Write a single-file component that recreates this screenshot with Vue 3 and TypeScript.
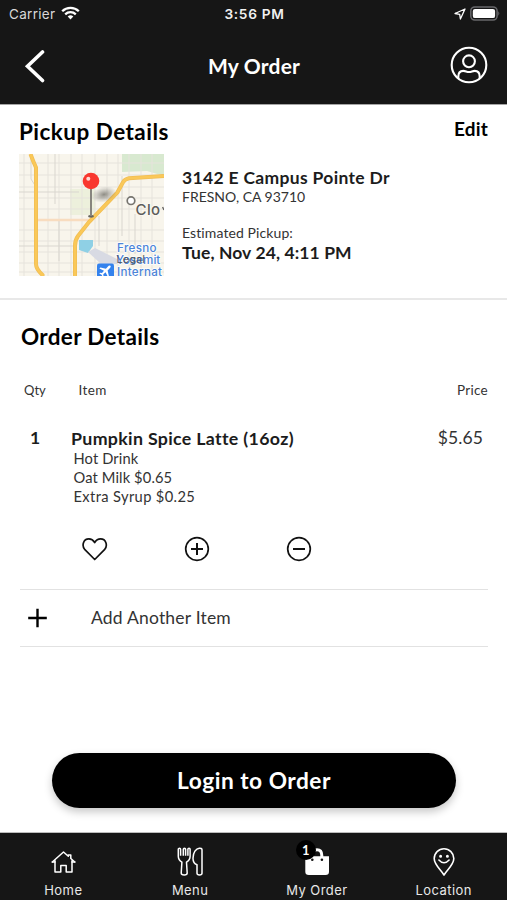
<script setup lang="ts">
interface Tab { id: string; label: string; badge?: number }

const item = {
  qty: 1,
  name: 'Pumpkin Spice Latte (16oz)',
  price: '$5.65',
  options: ['Hot Drink', 'Oat Milk $0.65', 'Extra Syrup $0.25'],
}

const tabs: Tab[] = [
  { id: 'home', label: 'Home' },
  { id: 'menu', label: 'Menu' },
  { id: 'order', label: 'My Order', badge: 1 },
  { id: 'location', label: 'Location' },
]

// Minor street grid of the map thumbnail
const streetsX = [5, 29, 40, 52, 63, 76, 88, 99, 110, 122, 133]
const streetsY = [9, 21, 33, 44, 55, 76, 87, 98, 109, 118]
</script>

<template>
  <div class="screen">
    <header class="top">
      <div class="status">
        <div class="carrier">
          <span>Carrier</span>
          <svg width="19" height="14" viewBox="0 0 19 14" fill="none" stroke="#fff" stroke-width="2.3">
            <path d="M1.2 5.2C5.8.7 13.2.7 17.8 5.2" />
            <path d="M4.2 8.3c3-2.8 7.600-2.8 10.600 0" />
            <path d="M6.700 10.500Q9.500 8.200 12.300 10.500L9.500 13.400z" fill="#fff" stroke="none" />
          </svg>
        </div>
        <span class="time">3:56 PM</span>
        <div class="power">
          <svg width="12" height="12" viewBox="0 0 12 12" fill="none" stroke="#fff" stroke-width="1.3" stroke-linejoin="round">
            <path d="M11 1 1 5.500l4.700.8.7 4.700z" />
          </svg>
          <svg width="30" height="15" viewBox="0 0 30 15">
            <rect x=".8" y=".9" width="26.300" height="13.200" rx="4" fill="#161616" stroke="#68686b" stroke-width="1.500" />
            <rect x="2.800" y="2.900" width="22.300" height="9.200" rx="2.200" fill="#fff" />
            <path d="M28.300 5.300q2 2.200 0 4.400z" fill="#68686b" />
          </svg>
        </div>
      </div>
      <div class="nav">
        <svg class="back" width="22" height="34" viewBox="0 0 22 34" fill="none" stroke="#fff" stroke-width="3.600" stroke-linecap="round">
          <path d="M18.500 3 3.500 17.300 18.500 31.500" />
        </svg>
        <h1>My Order</h1>
        <svg class="user" width="38" height="38" viewBox="0 0 38 38" fill="none" stroke="#fff" stroke-width="2.100">
          <circle cx="19" cy="19" r="17.300" />
          <circle cx="19" cy="15.300" r="5.900" />
          <path d="M8.300 32.200v-1.700c0-4 2.200-5.600 5-5.600 2.400 0 3.200 1.100 5.700 1.100s3.300-1.100 5.700-1.100c2.800 0 5 1.600 5 5.600v1.700" />
        </svg>
      </div>
    </header>

    <section class="pickup">
      <div class="pickup-head">
        <h2>Pickup Details</h2>
        <button class="edit">Edit</button>
      </div>
      <div class="pickup-body">
        <svg class="map" width="145" height="122" viewBox="0 0 145 122">
          <defs>
            <radialGradient id="pinShadow"><stop offset="0" stop-color="#55544c" stop-opacity=".65" /><stop offset="1" stop-color="#777" stop-opacity="0" /></radialGradient>
          </defs>
          <rect width="145" height="122" fill="#f8f5ec" />
          <path d="M103 0h42v22l-17-5-25 1z" fill="#d8e9d0" />
          <path d="M51 35h25v26H51z" fill="#edf0dc" />
          <g fill="none" stroke="#e6e3dc" stroke-width="1">
            <path v-for="x in streetsX" :key="'x' + x" :d="`M${x} 0V122`" />
            <path v-for="y in streetsY" :key="'y' + y" :d="`M0 ${y}H145`" />
          </g>
          <path d="M0 38h60M36 0v50M0 92h55M40 67v40M103 22v60M12 0v25l5 8M80 62v30M116 60v40" fill="none" stroke="#d9d6cf" stroke-width="1" />
          <path d="M15 66h58" stroke="#f8dcbf" stroke-width="2.500" />
          <path d="M11.500 0q2.500 7 5.500 13.500v96.500q0 5 6.500 11v3" fill="none" stroke="#f0bd55" stroke-width="4" />
          <path d="M11.500 0q2.500 7 5.500 13.500v96.500q0 5 6.500 11v3" fill="none" stroke="#fac858" stroke-width="2.600" />
          <path d="M145 22l-35 2.300q-4 .7-6 4l-5.500 10L70 68 59 82q-3 4-3 10v30" fill="none" stroke="#f0bd55" stroke-width="4" />
          <path d="M145 22l-35 2.300q-4 .7-6 4l-5.500 10L70 68 59 82q-3 4-3 10v30" fill="none" stroke="#fac858" stroke-width="2.600" />
          <path d="M60 86h14v6l-5 7-9-3z" fill="#8fd0e5" />
          <path d="M69 98l7-4 22 11v5H82z" fill="#d8dae3" />
          <ellipse cx="85" cy="40.500" rx="13" ry="8" fill="url(#pinShadow)" transform="rotate(-12 85 40.500)" />
          <ellipse cx="72" cy="62.300" rx="3" ry="1.400" fill="#66655e" />
          <path d="M72 33v29" stroke="#87857e" stroke-width="2" />
          <circle cx="72" cy="27" r="8.300" fill="#f9372f" />
          <circle cx="69.300" cy="24.800" r="2" fill="#ffd9d5" />
          <circle cx="112" cy="46.700" r="3.800" fill="#fff" stroke="#77756f" stroke-width="1.700" />
          <g font-family="Inter, sans-serif" stroke-linejoin="round" paint-order="stroke">
            <text x="116.500" y="60.800" font-size="15" font-weight="500" letter-spacing=".4" fill="#5d5c5a" stroke="#fbf9f2" stroke-width="1.500">Clo</text>
            <path d="M143.600 53l1.400 3" stroke="#5d5c5a" stroke-width="1.300" />
            <g font-size="11.600" font-weight="500" fill="#4c84d8" stroke="#fff" stroke-width="1.600">
              <text x="98" y="97.500" letter-spacing=".35">Fresno</text>
              <text x="97" y="110">Yosemit</text>
              <text x="98" y="121.700" letter-spacing=".3">Internat</text>
            </g>
            <text x="97.500" y="108.700" font-size="10.800" font-weight="500" letter-spacing=".1" fill="#4c5055" fill-opacity=".85">Legal</text>
          </g>
          <rect x="78" y="109.500" width="17" height="15" rx="2" fill="#3482ed" />
          <path d="M91.500 111.800q-1.300-.8-3 1.200l-1.600 1.700-5.500-1.300-1 1 4.600 2.300-2 2.300-2-.2-.7.7 2.300 1.200 1.200 2.300.7-.7-.2-2 2.300-2 2.300 4.600 1-1-1.300-5.500 1.700-1.600q2-1.700 1.200-3z" fill="#fff" />
        </svg>
        <div class="place">
          <p class="strong street">3142 E Campus Pointe Dr</p>
          <p class="city">FRESNO, CA 93710</p>
          <p class="eta">Estimated Pickup:</p>
          <p class="strong when">Tue, Nov 24, 4:11 PM</p>
        </div>
      </div>
    </section>

    <main class="order">
      <h2>Order Details</h2>
      <div class="row labels">
        <span>Qty</span><span class="label-item">Item</span><span class="label-price">Price</span>
      </div>
      <div class="row line">
        <span class="qty">{{ item.qty }}</span>
        <div>
          <h3>{{ item.name }}</h3>
          <ul><li v-for="(o, i) in item.options" :key="o" :class="{ wide: i === 2 }">{{ o }}</li></ul>
        </div>
        <span class="price">{{ item.price }}</span>
      </div>
      <div class="actions">
        <svg width="26" height="26" viewBox="0 0 26 26" fill="none" stroke="#111" stroke-width="1.700" stroke-linejoin="round">
          <path d="M12.700 23.500 2.900 13.700C-.6 9.700 1.300 2.900 6.900 2.900c2.500 0 4.300 1.200 5.800 3.600 1.500-2.400 3.300-3.600 5.800-3.600 5.600 0 7.500 6.800 4 10.800z" />
        </svg>
        <svg width="26" height="26" viewBox="0 0 26 26" fill="none" stroke="#111" stroke-width="1.700">
          <circle cx="13" cy="13" r="11.300" /><path d="M13 7v12M7 13h12" stroke-width="2" />
        </svg>
        <svg width="26" height="26" viewBox="0 0 26 26" fill="none" stroke="#111" stroke-width="1.700">
          <circle cx="13" cy="13" r="11.300" /><path d="M7 13h12" stroke-width="2" />
        </svg>
      </div>
      <div class="add">
        <svg width="20" height="20" viewBox="0 0 20 20" stroke="#000" stroke-width="2.400"><path d="M9.500 .7v18.600M.2 10h18.600" /></svg>
        <span>Add Another Item</span>
      </div>
    </main>

    <div class="cta"><button class="login">Login to Order</button></div>

    <nav class="tabs">
      <div v-for="t in tabs" :key="t.id" class="tab">
        <div class="glyph">
          <svg v-if="t.id === 'home'" width="26" height="30" viewBox="0 0 26 30" fill="none" stroke="#fff" stroke-width="1.500" stroke-linejoin="round" stroke-linecap="round">
            <path d="M2.300 15 13.500 5l4.800 4.200V8h2.500v3.500l4 3.500M5 13.800V25h5.800v-6.500h5.400V25H22V13.800" />
            <path d="M2.300 15H5M22 15h2.800" />
          </svg>
          <svg v-else-if="t.id === 'menu'" width="28" height="30" viewBox="0 0 28 30" fill="none" stroke="#fff" stroke-width="1.500" stroke-linejoin="round">
            <path d="M2.300 2.200v7c0 3 1.200 4.500 3.600 6L5.200 26c0 2.700 6 2.700 6 0l-.7-10.800c2.400-1.500 3.600-3 3.600-6v-7c0-1.200-2.200-1.200-2.200 0v6.500M9.600 8.700V2.200c0-1.200-2.300-1.200-2.300 0v6.500M4.600 8.700V2.200c0-1.200-2.300-1.200-2.300 0" />
            <path d="M26 2.700v23.500c0 2.300-5 2.300-5 0v-8.500c-2.500-.8-4-3-4-6.500C17 5.500 20 1.500 23.300 1.300c1.600-.1 2.700.3 2.700 1.400z" />
          </svg>
          <svg v-else-if="t.id === 'order'" width="26" height="30" viewBox="0 0 26 30">
            <path d="M8.300 10V8.500q0-5.800 4.700-5.800 4.800 0 4.800 5.800V10" fill="none" stroke="#fff" stroke-width="3" />
            <path d="M1.300 9.200h23.700v15.500q0 3.300-3.500 3.300H4.800q-3.500 0-3.500-3.300z" fill="#fff" />
            <circle cx="8.300" cy="12.800" r="1.300" fill="#161616" /><circle cx="17.900" cy="12.800" r="1.300" fill="#161616" />
          </svg>
          <svg v-else width="26" height="30" viewBox="0 0 26 30" fill="none" stroke="#fff" stroke-width="1.600" stroke-linecap="round" stroke-linejoin="round">
            <path d="M13 28C10 22.500 3.200 18 3.200 11.500a9.800 9.800 0 0 1 19.600 0C22.800 18 16 22.500 13 28z" />
            <path d="M7.900 13q5.100 5.600 10.200 0" />
            <circle cx="9.600" cy="9.200" r=".7" fill="#fff" /><circle cx="16.400" cy="9.200" r=".7" fill="#fff" />
          </svg>
          <span v-if="t.badge" class="badge">{{ t.badge }}</span>
        </div>
        <span class="tab-label">{{ t.label }}</span>
      </div>
    </nav>
  </div>
</template>

<style>
body { background: #fff; }
</style>

<style scoped>
* { box-sizing: border-box; }
.screen { width: 507px; height: 900px; display: flex; flex-direction: column; background: #fff; color: #222; font-family: Lato, "Noto Sans", sans-serif; overflow: hidden; }
h1, h2, h3, p, ul { margin: 0; padding: 0; list-style: none; }
button { border: 0; padding: 0; background: none; font: inherit; color: inherit; }
svg { display: block; flex: none; }

.top { height: 105px; background: #161616; border-bottom: 1px solid #a5a5a5; color: #fff; }
.status { display: grid; grid-template-columns: 1fr auto 1fr; align-items: center; height: 28px; padding: 0 7px 0 9px; font: 400 13px/28px Inter, sans-serif; }
.carrier { display: flex; align-items: center; gap: 6px; font-size: 13.5px; letter-spacing: .3px; color: #d8d8d8; }
.carrier svg { margin-top: -3px; }
.time { font-weight: 600; font-size: 13.7px; letter-spacing: .7px; color: #f0f0f0; }
.power { display: flex; align-items: center; justify-content: flex-end; gap: 4px; margin-top: -1px; }
.nav { display: grid; grid-template-columns: 1fr auto 1fr; align-items: center; height: 76px; padding: 0 19px 0 24px; }
.nav h1 { margin-left: -4px; font-size: 21px; line-height: 26px; letter-spacing: .2px; font-weight: 700; }
.nav .user { justify-self: end; margin-top: -2px; }
.nav .back { margin-top: -1px; }

.pickup { height: 195px; padding: 12px 19px 0; border-bottom: 2px solid #e8e8e8; }
.pickup-head { display: flex; justify-content: space-between; height: 37px; color: #000; }
h2 { font-size: 22.5px; line-height: 29px; letter-spacing: .47px; font-weight: 700; color: #000; }
.edit { height: 24px; line-height: 24px; font-size: 19px; letter-spacing: .2px; font-weight: 700; }
.pickup-body { display: flex; gap: 18px; }
.place { padding-top: 13px; }
.strong { font-size: 17.5px; font-weight: 700; line-height: 22px; color: #1c1c1c; }
.street { letter-spacing: .32px; }
.when { letter-spacing: .1px; }
.city { margin-top: -1px; margin-bottom: 18px; font-size: 14px; line-height: 17px; color: #333; }
.eta { font-size: 14px; line-height: 19px; letter-spacing: .1px; color: #333; }

.order { padding: 22px 19px 0 20px; }
.order h2 { letter-spacing: .34px; padding-left: 1px; }
.row { display: grid; }
.labels { grid-template-columns: 54.5px 1fr auto; margin-top: 31px; padding-left: 4px; font-size: 13px; line-height: 16px; color: #333; }
.label-item { font-size: 13.5px; letter-spacing: .4px; }
.label-price { font-size: 13.5px; letter-spacing: .3px; }
.line { grid-template-columns: 51px 1fr auto; margin-top: 29px; padding-right: 5px; font-size: 17.5px; line-height: 22px; }
.qty { font-weight: 700; padding-left: 10px; color: #1c1c1c; }
h3 { font-size: 17.8px; line-height: 22px; letter-spacing: .32px; font-weight: 700; color: #1c1c1c; }
.line ul { padding-left: 2.5px; }
.line li { font-size: 14.7px; line-height: 18.8px; letter-spacing: .12px; color: #333; }
.line li.wide { letter-spacing: .36px; }
.price { letter-spacing: .1px; color: #333; }
.actions { display: flex; gap: 76px; padding: 31px 0 26.6px 62px; }
.add { display: flex; align-items: center; gap: 43px; height: 58px; padding-left: 8px; border-top: 1px solid #e2e2e2; border-bottom: 1px solid #e2e2e2; font-size: 17.5px; letter-spacing: .2px; color: #333; }

.cta { margin-top: auto; padding: 0 51px 24px 52px; }
.login { display: block; width: 100%; height: 55px; padding-top: 1px; border-radius: 28px; background: #000; color: #fff; font-size: 22.7px; line-height: 54px; letter-spacing: .5px; font-weight: 700; box-shadow: 0 4px 9px rgba(0, 0, 0, .22); }

.tabs { display: grid; grid-template-columns: repeat(4, 1fr); height: 68px; padding-top: 14px; background: #161616; border-top: 1px solid #bcbcbc; color: #fff; }
.tab { display: flex; flex-direction: column; align-items: center; }
.glyph { position: relative; }
.tab-label { margin-top: 4px; font: 400 13px/18px Inter, sans-serif; letter-spacing: .45px; color: #e8e8e8; }
.badge { position: absolute; left: -8px; top: -7px; width: 20px; height: 20px; border-radius: 50%; background: #000; font: 700 13px/20px Lato, sans-serif; text-align: center; }
</style>
